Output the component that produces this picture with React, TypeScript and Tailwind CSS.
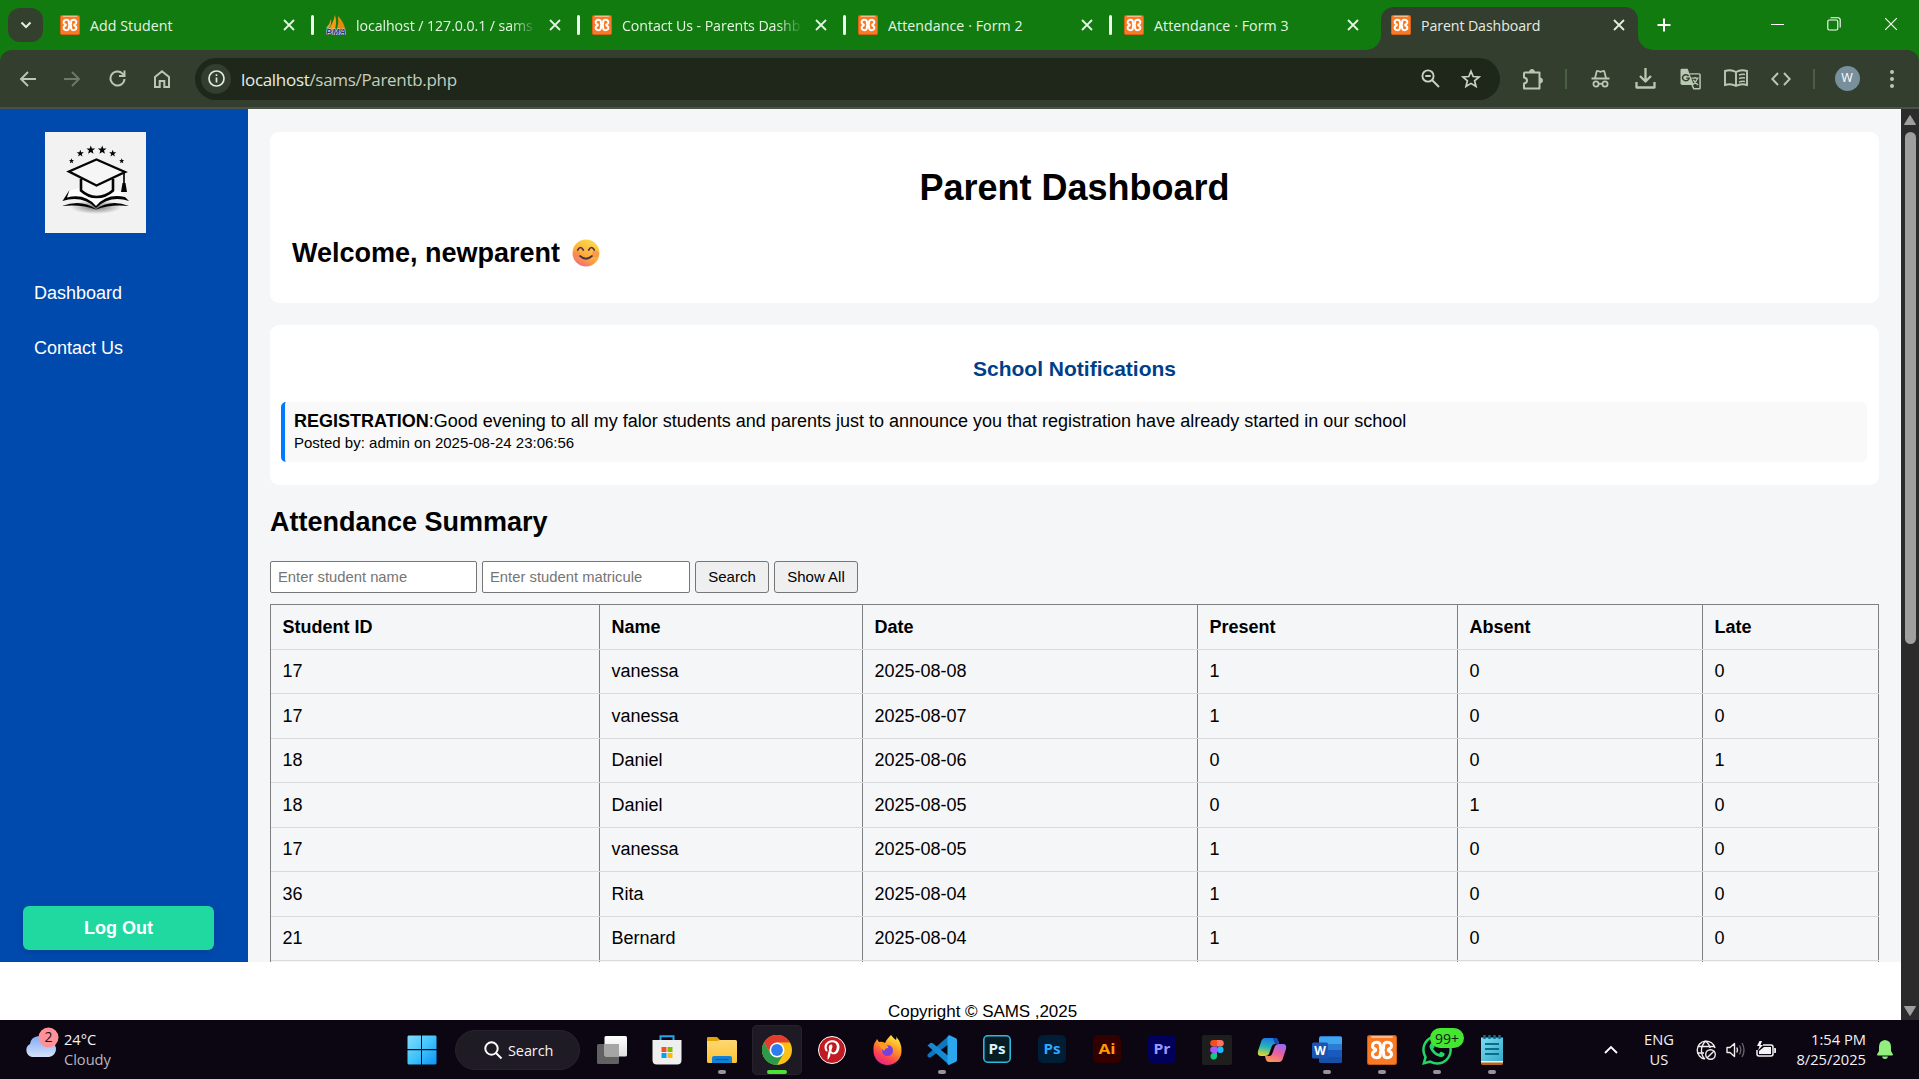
import React from "react";
import { FaPinterestP } from "react-icons/fa";
import { SiWhatsapp } from "react-icons/si";

function Xampp({ size }: { size: number }) {
  return (
    <svg width={size} height={size} viewBox="0 0 30 30" className="shrink-0">
      <rect width="30" height="30" rx="2.5" fill="#c95a14" />
      <rect x="1" y="1" width="28" height="28" rx="2" fill="#f97a24" />
      <rect x="4" y="1" width="22" height="2" rx="1" fill="#fbb98a" />
      <path
        d="M13.400 13.500V10.500C13.200 8.300 11.500 7.200 9.700 7.200 6.500 7.200 4.800 9.700 5.700 12.200 6.300 13.600 8.800 13.800 8.800 15 8.800 16.200 6.300 16.400 5.700 17.800 4.800 20.300 6.500 22.800 9.700 22.800 11.500 22.800 13.200 21.700 13.400 19.500V16.500H16.600V19.500C16.800 21.700 18.500 22.800 20.300 22.800 23.500 22.800 25.200 20.300 24.300 17.800 23.700 16.400 21.200 16.200 21.200 15 21.200 13.800 23.700 13.600 24.300 12.200 25.200 9.700 23.500 7.200 20.300 7.200 18.500 7.200 16.800 8.300 16.600 10.500V13.500Z"
        fill="none"
        stroke="#fff"
        strokeWidth="3"
        strokeLinejoin="round"
      />
    </svg>
  );
}

function Pma() {
  return (
    <svg width="20" height="20" viewBox="0 0 20 20" className="shrink-0">
      <path d="M9 0Q11 7 9 14L2 15Q7 9 9 0Z" fill="#f89c0e" />
      <path d="M12 1Q18 7 19 14L11 14Q13 8 12 1Z" fill="#e88a10" />
      <path d="M5 4Q6 9 3 13L0 13Q4 9 5 4Z" fill="#d9a04a" />
      <text x="0" y="19.500" fontSize="8.500" textLength="20" fontWeight="bold" fontStyle="italic" fontFamily="Liberation Sans, sans-serif" fill="#33337a" stroke="#d5d5e8" strokeWidth="1.200" paintOrder="stroke">PMA</text>
    </svg>
  );
}

function Cross({ className = "", s = 12, w = 1.8 }: { className?: string; s?: number; w?: number }) {
  return (
    <svg width={s} height={s} viewBox="0 0 12 12" className={className} fill="none" stroke="currentColor" strokeWidth={w}>
      <path d="M1 1L11 11M11 1L1 11" />
    </svg>
  );
}

function Tab({ title, pma, last, fade }: { title: string; pma?: boolean; last?: boolean; fade?: boolean }) {
  return (
    <div className="flex h-[50px] w-[266px] shrink-0 items-center pl-3 text-[#e4f5e2]">
      {pma ? <Pma /> : <Xampp size={20} />}
      <span className={"ml-[10px] w-[180px] whitespace-nowrap pt-px text-[14.200px] " + (fade ? "tracking-[-0.080px] [mask-image:linear-gradient(to_right,#000_155px,transparent_181px)]" : "tracking-[0.060px]")}>
        {title}
      </span>
      <Cross className="ml-[13px]" />
      {!last && <span className="ml-[16px] h-5 w-[3px] rounded bg-[#f1faf0]" />}
    </div>
  );
}

function TopBar() {
  return (
    <div className="flex h-[50px] bg-[#117b0f]">
      <div className="mt-2 mr-[5px] ml-2 flex h-[34px] w-[35px] shrink-0 items-center justify-center rounded-[12px] bg-[#33402e]">
        <svg width="12" height="8" viewBox="0 0 12 8" fill="none" stroke="#e4f0df" strokeWidth="2"><path d="M1.500 1.500L6 6L10.500 1.500" /></svg>
      </div>
      <Tab title="Add Student" />
      <Tab title="localhost / 127.0.0.1 / sams" pma fade />
      <Tab title="Contact Us - Parents Dashb" fade />
      <Tab title="Attendance · Form 2" />
      <Tab title="Attendance · Form 3" last />
      <div className="relative mt-[7px] ml-[3px] flex h-[43px] w-[257px] shrink-0 items-center rounded-t-[13px] bg-[#333e2e] pb-[7px] pl-[10px] text-[#e6ebe2]">
        <svg className="absolute bottom-0 -left-[15px]" width="15" height="15"><path d="M15 0V15H0A15 15 0 0 0 15 0" fill="#333e2e" /></svg>
        <svg className="absolute -right-[15px] bottom-0" width="15" height="15"><path d="M0 0V15H15A15 15 0 0 1 0 0" fill="#333e2e" /></svg>
        <Xampp size={20} />
        <span className="ml-[10px] w-[192px] pt-px text-[14.200px] tracking-[-0.100px]">Parent Dashboard</span>
        <Cross />
      </div>
      <div className="ml-[19px] flex w-[14px] items-center text-white">
        <svg width="14" height="14" viewBox="0 0 14 14" stroke="currentColor" strokeWidth="2"><path d="M7 0.500V13.500M0.500 7H13.500" /></svg>
      </div>
      <div className="ml-[78px] flex h-12 grow items-center text-white">
        <div className="flex w-[57px] justify-center"><span className="h-[1px] w-[13px] bg-white" /></div>
        <div className="flex w-[56px] justify-center">
          <svg width="14" height="14" viewBox="0 0 14 14" fill="none" stroke="currentColor" strokeWidth="1.100"><rect x="0.800" y="3" width="10" height="10" rx="1.500" /><path d="M3.500 0.800H11Q13.200 0.800 13.200 3V10.500" /></svg>
        </div>
        <div className="flex w-[57px] justify-center"><Cross s={14} w={1} /></div>
      </div>
    </div>
  );
}

const cell = "flex shrink-0 items-center justify-center";

function Toolbar() {
  return (
    <div className="bg-[#117b0f]">
    <div className="flex h-[59px] items-center rounded-t-[12px] border-b-2 border-[#4a5146] bg-[#333e2e] text-[#b9c8b2]">
      <div className={cell + " ml-[5px] w-[44px]"}>
        <svg width="17" height="16" viewBox="0 0 17 16" fill="none" stroke="currentColor" strokeWidth="1.900"><path d="M17 8H2M9 1L2 8L9 15" /></svg>
      </div>
      <div className={cell + " ml-px w-[44px] text-[#70786b]"}>
        <svg width="17" height="16" viewBox="0 0 17 16" fill="none" stroke="currentColor" strokeWidth="1.900"><path d="M0 8H15M8 1L15 8L8 15" /></svg>
      </div>
      <div className={cell + " w-[46px]"}>
        <svg width="17" height="17" viewBox="0 0 17 17" fill="none" stroke="currentColor" strokeWidth="2"><path d="M15.500 9A7 7 0 1 1 13.500 3.600L15.500 5.500M15.500 0.500V6H10" /></svg>
      </div>
      <div className={cell + " w-[44px]"}>
        <svg width="16" height="18" viewBox="0 0 16 18" fill="none" stroke="currentColor" strokeWidth="2"><path d="M1 17V7L8 1.300L15 7V17H10.300V11H5.700V17Z" /></svg>
      </div>
      <div className="ml-[11px] flex h-[42px] w-[1305px] shrink-0 items-center rounded-full bg-[#1e271a] pl-[6px]">
        <div className={cell + " size-[30px] rounded-full bg-[#333e2e] text-[#e3e8e0]"}>
          <svg width="17" height="17" viewBox="0 0 17 17" fill="none" stroke="currentColor" strokeWidth="1.700"><circle cx="8.500" cy="8.500" r="7.500" /><path d="M8.500 7.500V12.500M8.500 4.200V6" /></svg>
        </div>
        <span className="ml-[10px] pt-[2px] text-[17px] tracking-[-0.310px] text-[#c5cdbf]"><span className="text-[#e8ede4]">localhost</span>/sams/Parentb.php</span>
        <svg className="ml-auto" width="19" height="19" viewBox="0 0 19 19" fill="none" stroke="#c9d0c5" strokeWidth="1.900"><circle cx="7" cy="7" r="5.600" /><path d="M11 11L18 18M4.300 7H9.700" /></svg>
        <svg className="mr-[19px] ml-[21px]" width="20" height="20" viewBox="0 0 20 20" fill="none" stroke="#c9d0c5" strokeWidth="1.700"><path d="M10 2.300L12.200 7.500L18 8L13.600 11.800L15 17.500L10 14.400L5 17.500L6.400 11.800L2 8L7.800 7.500Z" /></svg>
      </div>
      <div className={cell + " ml-[10px] w-[46px]"}>
        <svg width="22" height="22" viewBox="0 0 22 22" fill="none" stroke="currentColor" strokeWidth="2"><path d="M3 4.500H17.500V20.500H2V15.500Q5 15 5 12.500Q5 10 2 9.500V5.500Q2 4.500 3 4.500Z" strokeLinejoin="round" /><path d="M7.500 4A2.500 2.500 0 0 1 12.500 4M18 10A2.300 2.300 0 0 1 18 15" fill="currentColor" strokeWidth="1" /></svg>
      </div>
      <div className={cell + " w-5"}><span className="h-5 w-[2px] bg-[#4b5f43]" /></div>
      <div className={cell + " w-12"}>
        <svg width="19" height="19" viewBox="0 0 19 19" fill="none" stroke="currentColor" strokeWidth="1.800"><path d="M0.500 9.500H18.500M4 9L5.700 2.500Q6 1.500 7 2L9.500 2.800L12 2Q13 1.500 13.300 2.500L15 9" /><circle cx="5" cy="15" r="2.600" /><circle cx="14" cy="15" r="2.600" /><path d="M7.500 14.800H11.500" /></svg>
      </div>
      <div className={cell + " w-[43px]"}>
        <svg width="21" height="21" viewBox="0 0 21 21" fill="none" stroke="currentColor" strokeWidth="2.300"><path d="M10.500 0V13M5 8L10.500 13.500L16 8M1.500 14V19.500H19.500V14" strokeLinejoin="round" /></svg>
      </div>
      <div className={cell + " w-[47px]"}>
        <svg width="21" height="22" viewBox="0 0 22 26" preserveAspectRatio="none"><path d="M10 7H20Q21 7 21 8V23.500Q21 24.500 20 24.500H14.500L12.500 20" fill="none" stroke="currentColor" strokeWidth="1.600" /><path d="M2 1H8L14.500 20H2.500Q0.500 20 0.500 18V2.500Q0.500 1 2 1Z" fill="currentColor" /><path d="M9 9.500A3.500 3.500 0 1 0 9.600 12H6.500" fill="none" stroke="#333e2e" strokeWidth="1.600" /><path d="M12 12H19.500M15.800 10.500V12M18.500 12Q17 17 13.500 19.500M14 14Q15.500 18 19 20" fill="none" stroke="currentColor" strokeWidth="1.500" /></svg>
      </div>
      <div className={cell + " w-[43px]"}>
        <svg width="24" height="19" viewBox="0 0 24 19" fill="none" stroke="currentColor" strokeWidth="1.900"><path d="M12 3Q7 0 1 2V16Q7 14 12 17Q17 14 23 16V2Q17 0 12 3V17" /><path d="M15 6Q18 5 21 5.500M15 9.500Q18 8.500 21 9M15 13Q18 12 21 12.500" strokeWidth="1.500" /></svg>
      </div>
      <div className={cell + " w-[47px]"}>
        <svg width="20" height="14" viewBox="0 0 20 14" fill="none" stroke="currentColor" strokeWidth="2"><path d="M7 1L1.300 7L7 13M13 1L18.700 7L13 13" /></svg>
      </div>
      <div className={cell + " w-5"}><span className="h-5 w-[2px] bg-[#4b5f43]" /></div>
      <div className={cell + " w-[46px]"}>
        <span className={cell + " size-[25px] rounded-full bg-[#78909c] text-[12.500px] text-white"}>W</span>
      </div>
      <div className={cell + " w-[44px]"}>
        <svg width="4" height="18" viewBox="0 0 4 18" fill="currentColor"><circle cx="2" cy="2" r="2" /><circle cx="2" cy="9" r="2" /><circle cx="2" cy="16" r="2" /></svg>
      </div>
    </div>
    </div>
  );
}

function star(cx: number, cy: number, r: number) {
  let d = "";
  for (let i = 0; i < 10; i++) {
    const a = (Math.PI / 5) * i - Math.PI / 2;
    const q = i % 2 ? r * 0.42 : r;
    d += `${i ? "L" : "M"}${cx + q * Math.cos(a)} ${cy + q * Math.sin(a)}`;
  }
  return d + "Z";
}

function Logo() {
  return (
    <svg width="101" height="101" viewBox="0 0 101 101">
      <defs>
        <radialGradient id="shade"><stop offset="0" stopColor="#777" /><stop offset="1" stopColor="#f2f2f2" /></radialGradient>
      </defs>
      <rect width="101" height="101" fill="#f2f2f2" />
      <ellipse cx="51" cy="75" rx="26" ry="7" fill="url(#shade)" />
      {[[26.5, 29, 2.7], [35.3, 21.5, 3.7], [45.8, 18, 4.6], [57.2, 18, 4.6], [67.7, 21.5, 3.7], [76.7, 29, 2.7]].map(([x, y, r]) => (
        <path key={x} d={star(x, y, r)} fill="#050505" />
      ))}
      <path d="M24 59L20 68Q35 64 51 75Q66 64 82 68L76 60L66 56L35 56Z" fill="#fff" />
      <path d="M36 47V58.500Q43 65 51.500 65Q61 65 68 58.500V47" fill="#f6f6f6" stroke="#050505" strokeWidth="2.600" />
      <path d="M51.500 27.500L80 40L51.500 53.500L24 39.500Z" fill="#f6f6f6" stroke="#050505" strokeWidth="2.400" />
      <path d="M79 40V53" stroke="#050505" strokeWidth="1.700" />
      <path d="M77.500 51H80.500L82 60H76Z" fill="#050505" />
      <path d="M24.500 58L17.500 69Q37 63 51 76Q65 63 84 69L80 65Q62 61 51 74Q40 61 22 65.500ZM17 74Q36 66.500 51 77Q66 66.500 84 74Q66 72 51 77.500Q36 72 17 74Z" fill="#050505" />
    </svg>
  );
}

function Emoji() {
  return (
    <svg className="ml-[12px]" width="28" height="28" viewBox="0 0 28 28">
      <defs>
        <linearGradient id="face" x1="0.750" y1="0" x2="0.250" y2="1"><stop offset="0" stopColor="#fddc4e" /><stop offset="0.600" stopColor="#fbaa3c" /><stop offset="1" stopColor="#f0687c" /></linearGradient>
      </defs>
      <circle cx="14" cy="14" r="13.500" fill="url(#face)" />
      <circle cx="4.500" cy="15" r="3.500" fill="#f97a55" opacity="0.500" />
      <circle cx="23.500" cy="15" r="3.500" fill="#f97a55" opacity="0.500" />
      <path d="M5.700 11Q8.500 6 11.300 11M16.700 11Q19.500 6 22.300 11" fill="none" stroke="#4a3040" strokeWidth="1.700" strokeLinecap="round" />
      <path d="M8 17Q14 22.500 20 17" fill="none" stroke="#4a3040" strokeWidth="1.700" strokeLinecap="round" />
    </svg>
  );
}

const rows = [
  ["17", "vanessa", "2025-08-08", "1", "0", "0"],
  ["17", "vanessa", "2025-08-07", "1", "0", "0"],
  ["18", "Daniel", "2025-08-06", "0", "0", "1"],
  ["18", "Daniel", "2025-08-05", "0", "1", "0"],
  ["17", "vanessa", "2025-08-05", "1", "0", "0"],
  ["36", "Rita", "2025-08-04", "1", "0", "0"],
  ["21", "Bernard", "2025-08-04", "1", "0", "0"],
];

const rowCls = "grid h-[44.540px] grid-cols-[329px_263px_335px_260px_245px_176px] border-b border-[#d9dadc]";
const cellCls = "flex items-center border-r border-[#7f8081] pt-px pl-[11.500px]";
const btn = "flex h-8 items-center justify-center rounded-[3px] border border-[#767676] bg-[#efefef] text-[15px]";
const field = "flex h-8 items-center rounded-[2px] border-[1.500px] border-[#767676] bg-white pl-[7px] text-[14.800px] text-[#757575]";

function Page() {
  return (
    <div className="flex h-[911px] bg-white font-['Liberation_Sans',Arial,sans-serif] text-[18px] text-black">
      <div className="flex w-[1901px] flex-col overflow-hidden">
        <div className="flex h-[853px] shrink-0">
          <div className="flex w-[248px] shrink-0 flex-col bg-[#004aad] text-white">
            <div className="mt-[23px] ml-[45px]"><Logo /></div>
            <div className="mt-[33px] ml-[34px] flex h-[55px] items-center">Dashboard</div>
            <div className="ml-[34px] flex h-[55px] items-center">Contact Us</div>
            <div className="mt-auto mb-[12px] ml-[23px] flex h-[44px] w-[191px] items-center justify-center rounded-[6px] bg-[#20d9a0] font-bold shadow-[0_2px_6px_rgba(0,0,0,0.150)]">Log Out</div>
          </div>
          <div className="flex grow flex-col overflow-hidden bg-[#f4f6f8] px-[22px]">
            <div className="mt-[23px] h-[171px] w-[1609px] shrink-0 rounded-[9px] bg-white px-[22px]">
              <h1 className="mt-[36px] text-center text-[36px] leading-[40px] font-bold">Parent Dashboard</h1>
              <h2 className="mt-[30px] flex h-[30px] items-center text-[27px] font-bold">Welcome, newparent <Emoji /></h2>
            </div>
            <div className="mt-[22px] h-[160px] w-[1609px] shrink-0 rounded-[9px] bg-white px-[11px]">
              <h3 className="mt-[32px] text-center text-[21px] leading-[24px] font-bold text-[#003f88]">School Notifications</h3>
              <div className="mt-[21px] mr-px h-[60px] rounded-[5px] border-l-4 border-[#007bff] bg-[#f9f9f9] pt-[8px] pl-[9px]">
                <div className="leading-[22px]"><b>REGISTRATION</b>:Good evening to all my falor students and parents just to announce you that registration have already started in our school</div>
                <div className="text-[15px] leading-[22px]">Posted by: admin on 2025-08-24 23:06:56</div>
              </div>
            </div>
            <h2 className="mt-[22px] text-[27px] leading-[30px] font-bold">Attendance Summary</h2>
            <div className="mt-[24px] flex shrink-0">
              <div className={field + " w-[207px]"}>Enter student name</div>
              <div className={field + " ml-[5px] w-[208px]"}>Enter student matricule</div>
              <div className={btn + " ml-[5px] w-[74px]"}>Search</div>
              <div className={btn + " ml-[5px] w-[84px]"}>Show All</div>
            </div>
            <div className="mt-[11px] w-[1609px] shrink-0 border-t border-l border-[#7f8081]">
              <div className={rowCls + " font-bold"}>
                {["Student ID", "Name", "Date", "Present", "Absent", "Late"].map((h) => <div key={h} className={cellCls}>{h}</div>)}
              </div>
              {rows.map((r, i) => (
                <div key={i} className={rowCls}>
                  {r.map((c, j) => <div key={j} className={cellCls}>{c}</div>)}
                </div>
              ))}
              <div className="grid h-[20px] grid-cols-[329px_263px_335px_260px_245px_176px]">
                {[0, 1, 2, 3, 4, 5].map((j) => <div key={j} className={cellCls} />)}
              </div>
            </div>
          </div>
        </div>
        <div className="mt-[40px] ml-[888px] shrink-0 text-[17px] leading-[20px] tracking-[-0.050px]">Copyright © SAMS ,2025</div>
      </div>
      <div className="flex w-[18px] shrink-0 flex-col items-center bg-[#2b2b2b]">
        <svg className="mt-[6px]" width="12" height="10" viewBox="0 0 12 10" fill="#9f9f9f"><path d="M6 0.500L11.500 9.500H0.500Z" stroke="#9f9f9f" strokeLinejoin="round" /></svg>
        <div className="mt-[7px] h-[512px] w-[11px] rounded-full bg-[#9f9f9f]" />
        <svg className="mt-auto mb-[4px]" width="12" height="10" viewBox="0 0 12 10" fill="#9f9f9f"><path d="M6 9.500L11.500 0.500H0.500Z" stroke="#9f9f9f" strokeLinejoin="round" /></svg>
      </div>
    </div>
  );
}

function App55({ children, run, active }: { children: React.ReactNode; run?: boolean; active?: boolean }) {
  return (
    <div className={"flex h-[50px] w-[50px] shrink-0 flex-col items-center rounded-[5px] " + (active ? "bg-[#1e1a24] shadow-[inset_0_0_0_1px_#26212b]" : "")}>
      <div className="flex h-[50px] shrink-0 items-center">{children}</div>
      {active && <span className="-mt-[5px] h-1 w-5 shrink-0 rounded-full bg-[#4be234]" />}
      {run && <span className="-mt-[5px] h-1 w-2 shrink-0 rounded-full bg-[#98939b]" />}
    </div>
  );
}

function Adobe({ label, bg, fg, edge }: { label: string; bg: string; fg: string; edge: string }) {
  return (
    <svg width="28" height="28" viewBox="0 0 28 28" className="mb-[2px]">
      <rect x="0.800" y="0.800" width="26.400" height="26.400" rx="4" fill={bg} stroke={edge} strokeWidth="1.600" />
      <text x="14" y="18.700" fontSize="15" textAnchor="middle" fontWeight="bold" fontFamily="Open Sans, sans-serif" textLength="17" lengthAdjust="spacingAndGlyphs" fill={fg}>{label}</text>
    </svg>
  );
}

function Taskbar() {
  return (
    <div className="flex h-[59px] bg-[#0b0611] text-[15px] text-[#f4f2f6]">
      <div className="flex w-[397px] shrink-0 pt-[7px] pl-[24px]">
        <svg width="36" height="34" viewBox="0 0 36 34">
          <defs><linearGradient id="cloud" x1="0" y1="0" x2="0" y2="1"><stop offset="0" stopColor="#83aaf5" /><stop offset="1" stopColor="#d2e2fb" /></linearGradient></defs>
          <path d="M8 30A7 7 0 0 1 6 17A9 9 0 0 1 23 14A8 8 0 0 1 25 30Z" fill="url(#cloud)" />
          <circle cx="24.500" cy="10.500" r="10" fill="#ff9199" />
          <text x="24.500" y="15" fontSize="14" textAnchor="middle" fontFamily="Open Sans, sans-serif" fill="#1b1016">2</text>
        </svg>
        <div className="ml-[4px] pt-[2px] text-[14.700px] leading-[20px] tracking-[-0.050px]">24°C<br /><span className="text-[#b9b5bd]">Cloudy</span></div>
      </div>
      <div className="flex grow pt-[5px]">
        <App55>
          <svg width="30" height="30" viewBox="0 0 30 30"><defs><linearGradient id="win" x1="0" y1="0" x2="1" y2="1"><stop offset="0" stopColor="#85dcfb" /><stop offset="0.500" stopColor="#3fc4fb" /><stop offset="1" stopColor="#0d93f8" /></linearGradient></defs><path d="M1.500 0.500H14V14H0.500V1.500ZM15 0.500H28.500L29.500 1.500V14H15ZM0.500 15.200H14V29.500H1.500L0.500 28.500ZM15 15.200H29.500V28.500L28.500 29.500H15Z" fill="url(#win)" /></svg>
        </App55>
        <div className="mt-[5px] ml-[8px] flex h-10 w-[125px] shrink-0 items-center rounded-full border border-[#27222c] bg-[#1f1b24] pl-[28px]">
          <svg width="19" height="19" viewBox="0 0 19 19" fill="none" stroke="#fff" strokeWidth="2"><circle cx="7.500" cy="7.500" r="6.200" /><path d="M12 12L17.500 17.500" /></svg>
          <span className="ml-[5px] pt-px text-[14.500px] tracking-[-0.100px]">Search</span>
        </div>
        <div className="ml-[7px] flex gap-[5px]">
          <App55><svg width="30" height="30" viewBox="0 0 30 30"><defs><linearGradient id="tv" x1="0" y1="0" x2="0" y2="1"><stop offset="0" stopColor="#fff" /><stop offset="1" stopColor="#dedede" /></linearGradient></defs><rect x="0" y="9" width="22" height="20" rx="1.500" fill="#616161" /><rect x="7.500" y="1" width="22.500" height="20.500" rx="1.500" fill="url(#tv)" /><path d="M7.500 9H22V21.500H8.500L7.500 20.500Z" fill="#a5a5a5" /></svg></App55>
          <App55><svg width="30" height="30" viewBox="0 0 30 30"><path d="M8.500 6V1.200H21.500V6" fill="none" stroke="#22a7e8" strokeWidth="2" /><path d="M0.500 5H29.500V25Q29.500 29.500 25 29.500H5Q0.500 29.500 0.500 25Z" fill="#efefef" /><path d="M9.500 12H14.500V17H9.500Z" fill="#f25022" /><path d="M15.500 12H20.500V17H15.500Z" fill="#7fba00" /><path d="M9.500 18H14.500V23H9.500Z" fill="#00a4ef" /><path d="M15.500 18H20.500V23H15.500Z" fill="#ffb900" /></svg></App55>
          <App55 run><svg width="30" height="28" viewBox="0 0 30 28"><defs><linearGradient id="fold" x1="0" y1="0" x2="0" y2="1"><stop offset="0" stopColor="#ffd873" /><stop offset="1" stopColor="#fcc332" /></linearGradient></defs><path d="M0 2Q0 1 1 1H10L14 5H0Z" fill="#e5a100" /><path d="M0 5H10L13.500 4H28.500Q30 4 30 5.500V25.500Q30 27 28.500 27H1.500Q0 27 0 25.500Z" fill="url(#fold)" /><path d="M5 27V21.500Q5 20 7 20H23Q25 20 25 21.500V27Z" fill="#1282d6" /><path d="M8.500 23.500H21.500" stroke="#0a5aa5" strokeWidth="1.200" /></svg></App55>
          <App55 active><svg width="30" height="30" viewBox="0 0 30 30"><circle cx="15" cy="15" r="15" fill="#fbc116" /><path d="M2 7.500A15 15 0 0 1 28 7.500H15L8.500 18.700Z" fill="#e33b2e" /><path d="M2 7.500A15 15 0 0 0 15 30L21.500 18.700H8.500Z" fill="#2b9a4b" /><circle cx="15" cy="15" r="7.500" fill="#fff" /><circle cx="15" cy="15" r="5.900" fill="#2f7cf0" /></svg></App55>
          <App55><span className={cell + " size-7 rounded-full border border-white bg-[#c01a22] text-white"}><FaPinterestP size={20} /></span></App55>
          <App55><svg width="29" height="30" viewBox="0 0 29 30"><defs><linearGradient id="ff" x1="0.800" y1="0" x2="0.300" y2="1"><stop offset="0" stopColor="#fff04a" /><stop offset="0.400" stopColor="#ff9a22" /><stop offset="0.750" stopColor="#fb4251" /><stop offset="1" stopColor="#e4248e" /></linearGradient></defs><path d="M18 0Q21 4 23 5Q24 3 23 1.500Q29 8 28.500 16A14 14 0 0 1 0.500 16Q0 9 3 6L4 4L6 7Q9 6 12 8Q13 5 18 0Z" fill="url(#ff)" /><circle cx="14.500" cy="15.500" r="5.500" fill="#7c3fdd" /><path d="M5 9Q9 7 13 10Q16 11 15 13Q12 13 11 16Q7 12 5 9Z" fill="#ff9b20" /></svg></App55>
          <App55 run><svg width="30" height="30" viewBox="0 0 30 30"><path d="M0.500 19.500L22 0.500V9L3.500 22.500Q2 23 0.500 21.500Z" fill="#0c77be" /><path d="M0.500 10.500L3.500 8Q4.500 7.500 6 8.500L22 21.500V30Z" fill="#1789d0" /><path d="M22 0L29 3.300Q30 4 30 5V25Q30 26 29 26.700L22 30Q20.500 29.500 20.500 28V2Z" fill="#2ba7ee" /></svg></App55>
          <App55><Adobe label="Ps" bg="#071d24" fg="#d7f4ff" edge="#2bb9e2" /></App55>
          <App55><Adobe label="Ps" bg="#001e36" fg="#31a8ff" edge="#001e36" /></App55>
          <App55><Adobe label="Ai" bg="#330000" fg="#ff9a00" edge="#330000" /></App55>
          <App55><Adobe label="Pr" bg="#00005b" fg="#9999ff" edge="#00005b" /></App55>
          <App55><svg width="30" height="30" viewBox="0 0 30 30"><rect width="30" height="30" rx="2" fill="#1e1e1e" /><path d="M15 5H11.500A3.250 3.250 0 0 0 11.500 11.500H15Z" fill="#f24e1e" /><path d="M15 5H18.500A3.250 3.250 0 0 1 18.500 11.500H15Z" fill="#ff7262" /><path d="M15 11.500H11.500A3.250 3.250 0 0 0 11.500 18H15Z" fill="#a259ff" /><circle cx="18.300" cy="14.700" r="3.250" fill="#1abcfe" /><path d="M15 18H11.500A3.250 3.250 0 1 0 15 21.300Z" fill="#0acf83" /></svg></App55>
          <App55><svg width="30" height="26" viewBox="0 0 30 26"><defs><linearGradient id="c1" x1="0.500" y1="0" x2="0.300" y2="1"><stop offset="0" stopColor="#1b78e8" /><stop offset="0.500" stopColor="#28b5b5" /><stop offset="1" stopColor="#e5d72c" /></linearGradient><linearGradient id="c2" x1="0.700" y1="0" x2="0.300" y2="1"><stop offset="0" stopColor="#9a6af0" /><stop offset="0.500" stopColor="#ec5fa0" /><stop offset="1" stopColor="#fb9a48" /></linearGradient></defs><path d="M8 1H18Q20.500 1 21.300 4L22 7H18Q15.500 7 14.500 10L12 17Q11 19 8 19H4Q0 19 1 14L4 5Q5 1 8 1Z" fill="url(#c1)" /><path d="M16 1H18Q20.500 1 21.300 4L22 7H18Z" fill="#1747b8" /><path d="M22 25H12Q9.500 25 8.700 22L8 19H12Q14.500 19 15.500 16L18 9Q19 7 22 7H26Q30 7 29 12L26 21Q25 25 22 25Z" fill="url(#c2)" /></svg></App55>
          <App55 run><svg width="30" height="28" viewBox="0 0 30 28"><rect x="7" width="23" height="27" rx="1.500" fill="#174ea6" /><path d="M8.500 0.500H28.500Q30 0.500 30 2V8H7V2Z" fill="#41a5ee" /><path d="M7 8H30V14H7Z" fill="#2b7cd3" /><path d="M7 14H30V21H7Z" fill="#185abd" /><rect y="6.500" width="16" height="16" rx="1.500" fill="#1a55b5" /><text x="8" y="18.700" fontSize="12" textAnchor="middle" fontWeight="bold" fontFamily="Open Sans, sans-serif" fill="#fff">W</text></svg></App55>
          <App55 run><Xampp size={30} /></App55>
          <App55 run>
            <div className="relative text-[#25d366]">
              <SiWhatsapp size={30} />
              <span className={cell + " absolute -top-[7px] left-[8px] h-5 w-[34px] rounded-full bg-[#45e632] text-[14px] text-[#10210c]"}>99+</span>
            </div>
          </App55>
          <App55 run><svg width="22" height="30" viewBox="0 0 22 30"><defs><linearGradient id="np" x1="0" y1="0" x2="1" y2="1"><stop offset="0" stopColor="#7ddcf0" /><stop offset="1" stopColor="#34aacb" /></linearGradient></defs><path d="M0 24H22V28.500Q22 30 20 30H2Q0 30 0 28.500Z" fill="#b5651d" /><path d="M0 24H22V27.500H0Z" fill="#f2f2f2" /><path d="M0 2.500H22V26H0Z" fill="url(#np)" /><path d="M4 9H18M4 14H18M4 19H18" stroke="#0c6c8c" strokeWidth="2" /><path d="M3.500 0V4M8.500 0V4M13.500 0V4M18.500 0V4" stroke="#0d7090" strokeWidth="2.400" /></svg></App55>
        </div>
      </div>
      <div className="flex w-[319px] shrink-0 items-center">
        <svg className="ml-[4px]" width="14" height="9" viewBox="0 0 14 9" fill="none" stroke="#fff" strokeWidth="1.800"><path d="M1 8L7 2L13 8" /></svg>
        <div className="ml-[21px] w-[40px] pb-[2px] text-center text-[14.700px] leading-[20px]">ENG<br />US</div>
        <svg className="ml-[17px]" width="20" height="20" viewBox="0 0 20 20" fill="none" stroke="#eee" strokeWidth="1.400"><path d="M19 8A9 9 0 1 0 9 19M9.500 1Q5 6 5.500 11Q6 17 9 19M9.500 1Q14 5 14 8M1.500 6.500H18M1 13H8" /><circle cx="14.500" cy="14.500" r="4.800" /><path d="M11.200 17.800L17.800 11.200" /></svg>
        <svg className="ml-[10px]" width="20" height="18" viewBox="0 0 20 18" fill="none" stroke="#eee" strokeWidth="1.400"><path d="M1 6.500H4L8.500 2.500V15.500L4 11.500H1Z" strokeLinejoin="round" /><path d="M10.800 6.500Q12.200 9 10.800 11.500" /><path d="M13.500 4.500Q16 9 13.500 13.500M16 2Q20 9 16 16" stroke="#67626c" /></svg>
        <svg className="ml-[10px]" width="20" height="17" viewBox="0 0 20 17" fill="none" stroke="#f4f4f4" strokeWidth="1.500"><path d="M7 4H15Q17 4 17 6V13Q17 15 15 15H3Q1 15 1 13V9" /><path d="M8 6H15V13H3V10Z" fill="#f4f4f4" stroke="none" /><path d="M18.200 7.500H19.500V11.500H18.200" fill="#f4f4f4" strokeWidth="1" /><path d="M3.500 0L1 5H3.500L2 9.500L7 4H4.500L6 0Z" fill="#f4f4f4" stroke="none" /></svg>
        <div className="ml-[10px] w-[80px] pb-[2px] text-right text-[14.700px] leading-[20px] whitespace-nowrap">1:54 PM<br />8/25/2025</div>
        <svg className="ml-[11px]" width="16" height="19" viewBox="0 0 16 19" fill="#92ee7d"><path d="M8 0Q14 0.500 14 7V11L16 14.500Q16 15.500 15 15.500H1Q0 15.500 0 14.500L2 11V7Q2 0.500 8 0ZM5 16.500H11Q10.500 19 8 19Q5.500 19 5 16.500Z" /></svg>
      </div>
    </div>
  );
}

export default function App() {
  return (
    <div className="h-[1079px] w-[1919px] overflow-hidden font-['Open_Sans','Noto_Sans',sans-serif]">
      <TopBar />
      <Toolbar />
      <Page />
      <Taskbar />
    </div>
  );
}
